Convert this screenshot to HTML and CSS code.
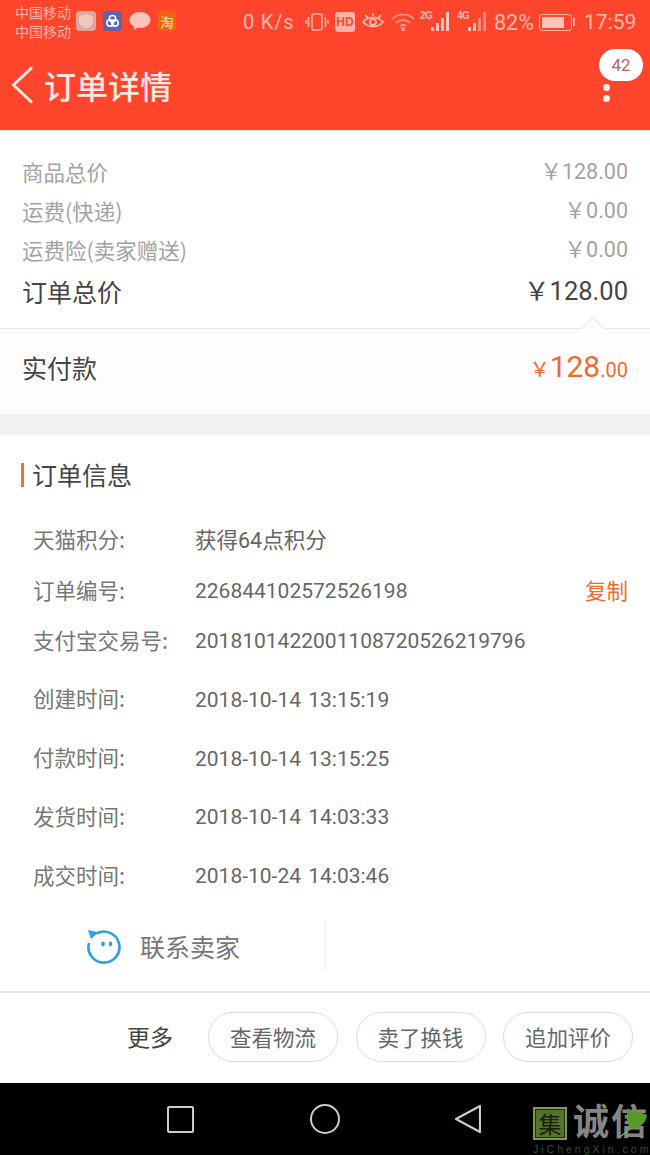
FILE: index.html
```html
<!DOCTYPE html>
<html>
<head>
<meta charset="utf-8">
<title>订单详情</title>
<link rel="stylesheet" href="styles.css">
</head>
<body>
<div class="top">
  <div class="status">
    <div class="carrier"><div>中国移动</div><div>中国移动</div></div>
    <div class="notes">
      <span class="note note-shield"><svg width="14" height="15" viewBox="0 0 14 15"><path d="M7 0l7 2v5c0 4-3 6-7 8-4-2-7-4-7-8V2z" fill="#f3c6bb"/></svg></span>
      <span class="note note-blue"><svg width="19" height="20" viewBox="0 0 20 20" fill="none" stroke="#fff" stroke-width="1.6"><circle cx="10" cy="7.5" r="3.4"/><circle cx="7.4" cy="12" r="3.4"/><circle cx="12.6" cy="12" r="3.4"/></svg></span>
      <svg width="22" height="20" viewBox="0 0 22 20"><ellipse cx="11" cy="9" rx="10.500" ry="8" fill="#ffc4bb"/><path d="M5 14l0 5 6-4z" fill="#ffc4bb"/></svg>
      <span class="note note-tao">淘</span>
    </div>
    <div class="speed">0 K/s</div>
    <div class="indicators">
      <svg width="24" height="20" viewBox="0 0 24 20" fill="none" stroke="#ffb3a6" stroke-width="1.6"><rect x="7" y="2" width="10" height="16" rx="2"/><path d="M3.500 5v10M1 8v4M20.500 5v10M23 8v4"/></svg>
      <span class="hd">HD</span>
      <svg width="24" height="20" viewBox="0 0 24 20" fill="none" stroke="#ffc4bb" stroke-width="1.700"><path d="M2 10c5-6 15-6 20 0-5 6-15 6-20 0z"/><circle cx="12" cy="10" r="3"/><path d="M4 3l3 3M20 3l-3 3M12 1v3"/></svg>
      <svg width="24" height="20" viewBox="0 0 24 20" fill="none" stroke="#ff9c8d" stroke-width="1.600"><path d="M1 7c6-6 16-6 22 0M5 11c4-4 10-4 14 0M9 14c2-1.500 4-1.500 6 0"/><circle cx="12" cy="17" r="1.500" fill="#ff9c8d"/></svg>
      <span class="signal"><i class="net">2G</i><svg width="22" height="22" viewBox="0 0 22 22" fill="#ffc4bb"><rect x="1" y="17" width="3" height="4"/><rect x="6" y="13" width="3" height="8"/><rect x="11" y="8" width="3" height="13"/><rect x="16" y="2" width="3" height="19"/></svg></span>
      <span class="signal"><i class="net">4G</i><svg width="22" height="22" viewBox="0 0 22 22"><rect x="1" y="17" width="3" height="4" fill="#ffc4bb"/><rect x="6" y="13" width="3" height="8" fill="#ffc4bb"/><rect x="11" y="8" width="3" height="13" fill="#ff8a78"/><rect x="16" y="2" width="3" height="19" fill="#ff8a78"/></svg></span>
    </div>
    <div class="pct">82%</div>
    <div class="batt"><span class="batt-body"><span class="batt-fill"></span></span><span class="batt-tip"></span></div>
    <div class="clock">17:59</div>
  </div>
  <div class="bar">
    <svg class="back" width="24" height="38" viewBox="0 0 24 38" fill="none" stroke="#ffe6e0" stroke-width="3"><path d="M21 1.500L2.500 19 21 36.500"/></svg>
    <div class="bar-title">订单详情</div>
    <div class="more">
      <span class="badge">42</span>
      <span class="dot"></span>
      <span class="dot"></span>
    </div>
  </div>
</div>

<div class="summary">
  <div class="row"><span>商品总价</span><span class="num">￥128.00</span></div>
  <div class="row"><span>运费(快递)</span><span class="num">￥0.00</span></div>
  <div class="row"><span>运费险(卖家赠送)</span><span class="num">￥0.00</span></div>
  <div class="row row-total"><span>订单总价</span><span class="num">￥128.00</span></div>
</div>
<div class="paid">
  <span class="notch"></span>
  <span class="paid-label">实付款</span>
  <span class="paid-num"><small>￥</small><b>128</b><small>.00</small></span>
</div>
<div class="gap"></div>

<div class="info">
  <div class="info-head">订单信息</div>
  <div class="line l1"><span class="key">天猫积分:</span><span class="val">获得64点积分</span></div>
  <div class="line"><span class="key">订单编号:</span><span class="val">226844102572526198</span><span class="copy">复制</span></div>
  <div class="line"><span class="key">支付宝交易号:</span><span class="val">2018101422001108720526219796</span></div>
  <div class="line l3"><span class="key">创建时间:</span><span class="val">2018-10-14 13:15:19</span></div>
  <div class="line l3"><span class="key">付款时间:</span><span class="val">2018-10-14 13:15:25</span></div>
  <div class="line l3"><span class="key">发货时间:</span><span class="val">2018-10-14 14:03:33</span></div>
  <div class="line l3"><span class="key">成交时间:</span><span class="val">2018-10-24 14:03:46</span></div>
</div>

<div class="contact">
  <div class="contact-cell">
    <svg width="36" height="36" viewBox="0 0 36 36" fill="none"><path d="M10.500 4.500A15.500 15.500 0 1 1 3 14" stroke="#2ba3e0" stroke-width="2.600"/><path d="M2 1L12.500 3.200 5 10z" fill="#2ba3e0"/><ellipse cx="17" cy="15" rx="1.800" ry="2.400" fill="#2ba3e0"/><ellipse cx="24.500" cy="15" rx="1.800" ry="2.400" fill="#2ba3e0"/></svg>
    <span class="contact-text">联系卖家</span>
  </div>
</div>

<div class="actions">
  <span class="more-text">更多</span>
  <span class="pill">查看物流</span>
  <span class="pill">卖了换钱</span>
  <span class="pill">追加评价</span>
</div>

<div class="nav">
  <span class="nav-square"></span>
  <span class="nav-circle"></span>
  <svg class="nav-back" width="28" height="30" viewBox="0 0 28 30" fill="none" stroke="#ccc" stroke-width="2.200" stroke-linejoin="round"><path d="M27 2v26L3 15z"/></svg>
  <div class="mark">
    <div class="mark-top"><span class="mark-seal">集</span><span class="mark-name">诚信</span></div>
    <div class="mark-url">JiChengXin.com</div>
    <svg class="mark-leaf" width="32" height="32" viewBox="0 0 32 32"><path d="M10 1C13 6 20 3 29 8 29 15 20 23 13 22 8 16 8 8 10 1z" fill="#55992b"/><path d="M13 21L2 30" stroke="#7cae55" stroke-width="1.500"/></svg>
  </div>
</div>
</body>
</html>
```

FILE: styles.css
```css
* {
  box-sizing: border-box;
}

body {
  margin: 0;
  width: 650px;
  height: 1155px;
  overflow: hidden;
  background: #fff;
  font-family: "Noto Sans CJK SC", "Liberation Sans", sans-serif;
}

.num, .val, .speed, .pct, .clock, .badge, .paid-num {
  font-family: Roboto, "Noto Sans CJK SC", sans-serif;
}

.top {
  height: 130px;
  background: #ff462d;
  color: #ffb9ad;
}

.status {
  height: 44px;
  display: flex;
  align-items: center;
  padding: 0 0 0 15px;
}

.carrier {
  font-size: 14px;
  line-height: 19px;
  width: 61px;
  flex: none;
  margin-top: -1px;
  color: #ffb3a6;
  white-space: nowrap;
}

.notes {
  display: flex;
  align-items: center;
  gap: 7px;
  width: 100px;
  flex: none;
  margin-top: -2px;
}

.note {
  width: 20px;
  height: 20px;
  border-radius: 4px;
  display: flex;
  align-items: center;
  justify-content: center;
  flex: none;
}

.note-shield {
  background: #d9a99b;
}

.note-blue {
  background: #5d63ae;
  width: 19px;
}

.note-tao {
  background: #f0660d;
  color: #ffe9c9;
  font-size: 13px;
  width: 18px;
}

.speed {
  margin-left: 67px;
  font-size: 20px;
  letter-spacing: .8px;
  width: 62px;
  flex: none;
  white-space: nowrap;
}

.indicators {
  display: flex;
  align-items: center;
  gap: 6px;
  flex: none;
  width: 189px;
}

.hd {
  width: 20px;
  height: 20px;
  border-radius: 3px;
  background: #ffb3a6;
  color: #ff462d;
  font: bold 12px/20px "Liberation Sans", sans-serif;
  text-align: center;
  flex: none;
}

.signal {
  display: flex;
  align-items: flex-start;
  width: 32px;
  height: 24px;
  flex: none;
  margin-left: -1px;
}

.net {
  width: 10px;
  flex: none;
  padding-top: 1px;
  font: bold 10px/10px "Liberation Sans", sans-serif;
  letter-spacing: -.5px;
  white-space: nowrap;
}

.pct {
  font-size: 21.500px;
  width: 45px;
  flex: none;
}

.batt {
  display: flex;
  align-items: center;
  flex: none;
}

.batt-body {
  display: block;
  width: 33px;
  height: 17px;
  border: 1.500px solid #ffb3a6;
  border-radius: 3px;
  padding: 2px;
}

.batt-fill {
  display: block;
  width: 82%;
  height: 100%;
  background: #ffc4bb;
}

.batt-tip {
  width: 2px;
  height: 8px;
  background: #ffb3a6;
  margin-left: 1px;
}

.clock {
  font-size: 21px;
  margin-left: 9px;
  white-space: nowrap;
}

.bar {
  height: 86px;
  display: flex;
  align-items: center;
  padding: 0 7px 4px 11px;
}

.back {
  margin-right: 9px;
  flex: none;
}

.bar-title {
  font-size: 32px;
  line-height: 40px;
  color: #ffe6e0;
  font-weight: 500;
  flex: 1;
}

.more {
  position: relative;
  width: 44px;
  height: 82px;
  flex: none;
}

.badge {
  position: absolute;
  right: 0;
  top: 5px;
  width: 44px;
  height: 32px;
  border-radius: 16px;
  background: #fff;
  color: #b5655c;
  font-size: 17px;
  line-height: 32px;
  text-align: center;
}

.dot {
  position: absolute;
  left: 4px;
  top: 40px;
  width: 7px;
  height: 7px;
  border-radius: 50%;
  background: #ffeee9;
}

.dot + .dot {
  top: 51px;
}

.summary {
  height: 199px;
  padding: 21px 22px 0;
  background: #fff;
  border-top: 1px solid #ffe2da;
  border-bottom: 1px solid #e8e8ea;
}

.row {
  display: flex;
  justify-content: space-between;
  align-items: center;
  height: 39px;
  font-size: 21.500px;
  color: #a3a3a3;
}

.row .num {
  font-size: 21.500px;
  margin-bottom: 4px;
}

.row-total {
  height: 42px;
  margin-top: 1px;
  color: #444;
  font-size: 25px;
}

.row-total .num {
  font-size: 25.500px;
  margin-bottom: 5px;
}

.paid {
  position: relative;
  height: 85px;
  padding: 0 22px 10px;
  display: flex;
  justify-content: space-between;
  align-items: center;
  background: #fefcfe;
  color: #444;
}

.notch {
  position: absolute;
  right: 49.500px;
  top: -9.500px;
  width: 17px;
  height: 17px;
  transform: rotate(45deg);
  background: #fefcfe;
  border: 1px solid #e8e8ea;
  border-width: 1px 0 0 1px;
}

.paid-label {
  font-size: 25px;
}

.paid-num {
  color: #ee6a2d;
  white-space: nowrap;
}

.paid-num b {
  font-weight: 400;
  font-size: 30px;
}

.paid-num small {
  font-size: 20px;
}

.gap {
  height: 21px;
  background: #f1f1f3;
}

.info {
  padding: 0 22px;
}

.info-head {
  padding: 24px 0 0 10px;
  height: 80px;
  position: relative;
  font-size: 25px;
  line-height: 30px;
  color: #444;
}

.info-head::before {
  content: "";
  position: absolute;
  left: -1px;
  top: 28px;
  width: 3px;
  height: 24px;
  background: #f0702d;
}

.line {
  display: flex;
  align-items: center;
  height: 50px;
  padding-left: 11px;
  font-size: 21.500px;
  color: #777;
}

.l1 {
  height: 51px;
}

.l1 .val {
  font-size: 21.500px;
  margin-bottom: 5px;
}

.l3 {
  margin-top: 8.750px;
}

.l3 .val {
  word-spacing: 2px;
}

.key {
  width: 162px;
  flex: none;
  margin-bottom: 4px;
}

.val {
  flex: 1;
  color: #666;
  font-size: 21px;
}

.copy {
  color: #ee6a2d;
  margin-bottom: 4px;
}

.contact {
  height: 92px;
  padding-top: 21px;
  border-bottom: 2px solid #e6e6e6;
}

.contact-cell {
  width: 326px;
  height: 50px;
  display: flex;
  align-items: center;
  gap: 18px;
  padding-left: 86px;
  border-right: 1px solid #eee;
  font-size: 25px;
  color: #777;
}

.contact-text {
  margin-bottom: 2px;
}

.actions {
  height: 90px;
  display: flex;
  align-items: center;
  gap: 17.500px;
  padding: 0 0 2px 127px;
  background: #fff;
}

.more-text {
  font-size: 23px;
  color: #444;
  width: 63.500px;
  flex: none;
  margin-bottom: 2px;
}

.pill {
  width: 130px;
  height: 50px;
  border: 1.500px solid #dcdcdc;
  border-radius: 25px;
  text-align: center;
  font-size: 21.500px;
  line-height: 47px;
  color: #666;
  flex: none;
}

.nav {
  position: relative;
  height: 72px;
  background: #000;
  display: flex;
  align-items: center;
}

.nav-square {
  width: 27px;
  height: 27px;
  border: 2.500px solid #ccc;
  border-radius: 2px;
  margin-left: 167px;
}

.nav-circle {
  width: 30px;
  height: 30px;
  border: 2.500px solid #ccc;
  border-radius: 50%;
  margin-left: 116px;
}

.nav-back {
  margin-left: 113px;
}

.mark {
  position: absolute;
  left: 533px;
  top: 23px;
  width: 117px;
  height: 49px;
}

.mark-top {
  display: flex;
  align-items: center;
  height: 34px;
}

.mark-seal {
  width: 34px;
  height: 33px;
  background: #56732c;
  border: 2px solid #7d9a4f;
  box-shadow: inset 0 0 0 1px #22300f;
  color: #17220a;
  font-size: 23px;
  line-height: 28px;
  text-align: center;
  flex: none;
}

.mark-name {
  margin-left: 6px;
  font-family: "Liberation Sans", "Noto Sans CJK SC", sans-serif;
  font-size: 36px;
  letter-spacing: 2px;
  font-weight: 700;
  line-height: 34px;
  color: #858585;
  white-space: nowrap;
}

.mark-url {
  font: 10.500px/11px "Liberation Sans", sans-serif;
  letter-spacing: 3px;
  color: #33532a;
  margin-top: 4px;
  white-space: nowrap;
}

.mark-leaf {
  position: absolute;
  left: 85px;
  top: 1px;
}
```
